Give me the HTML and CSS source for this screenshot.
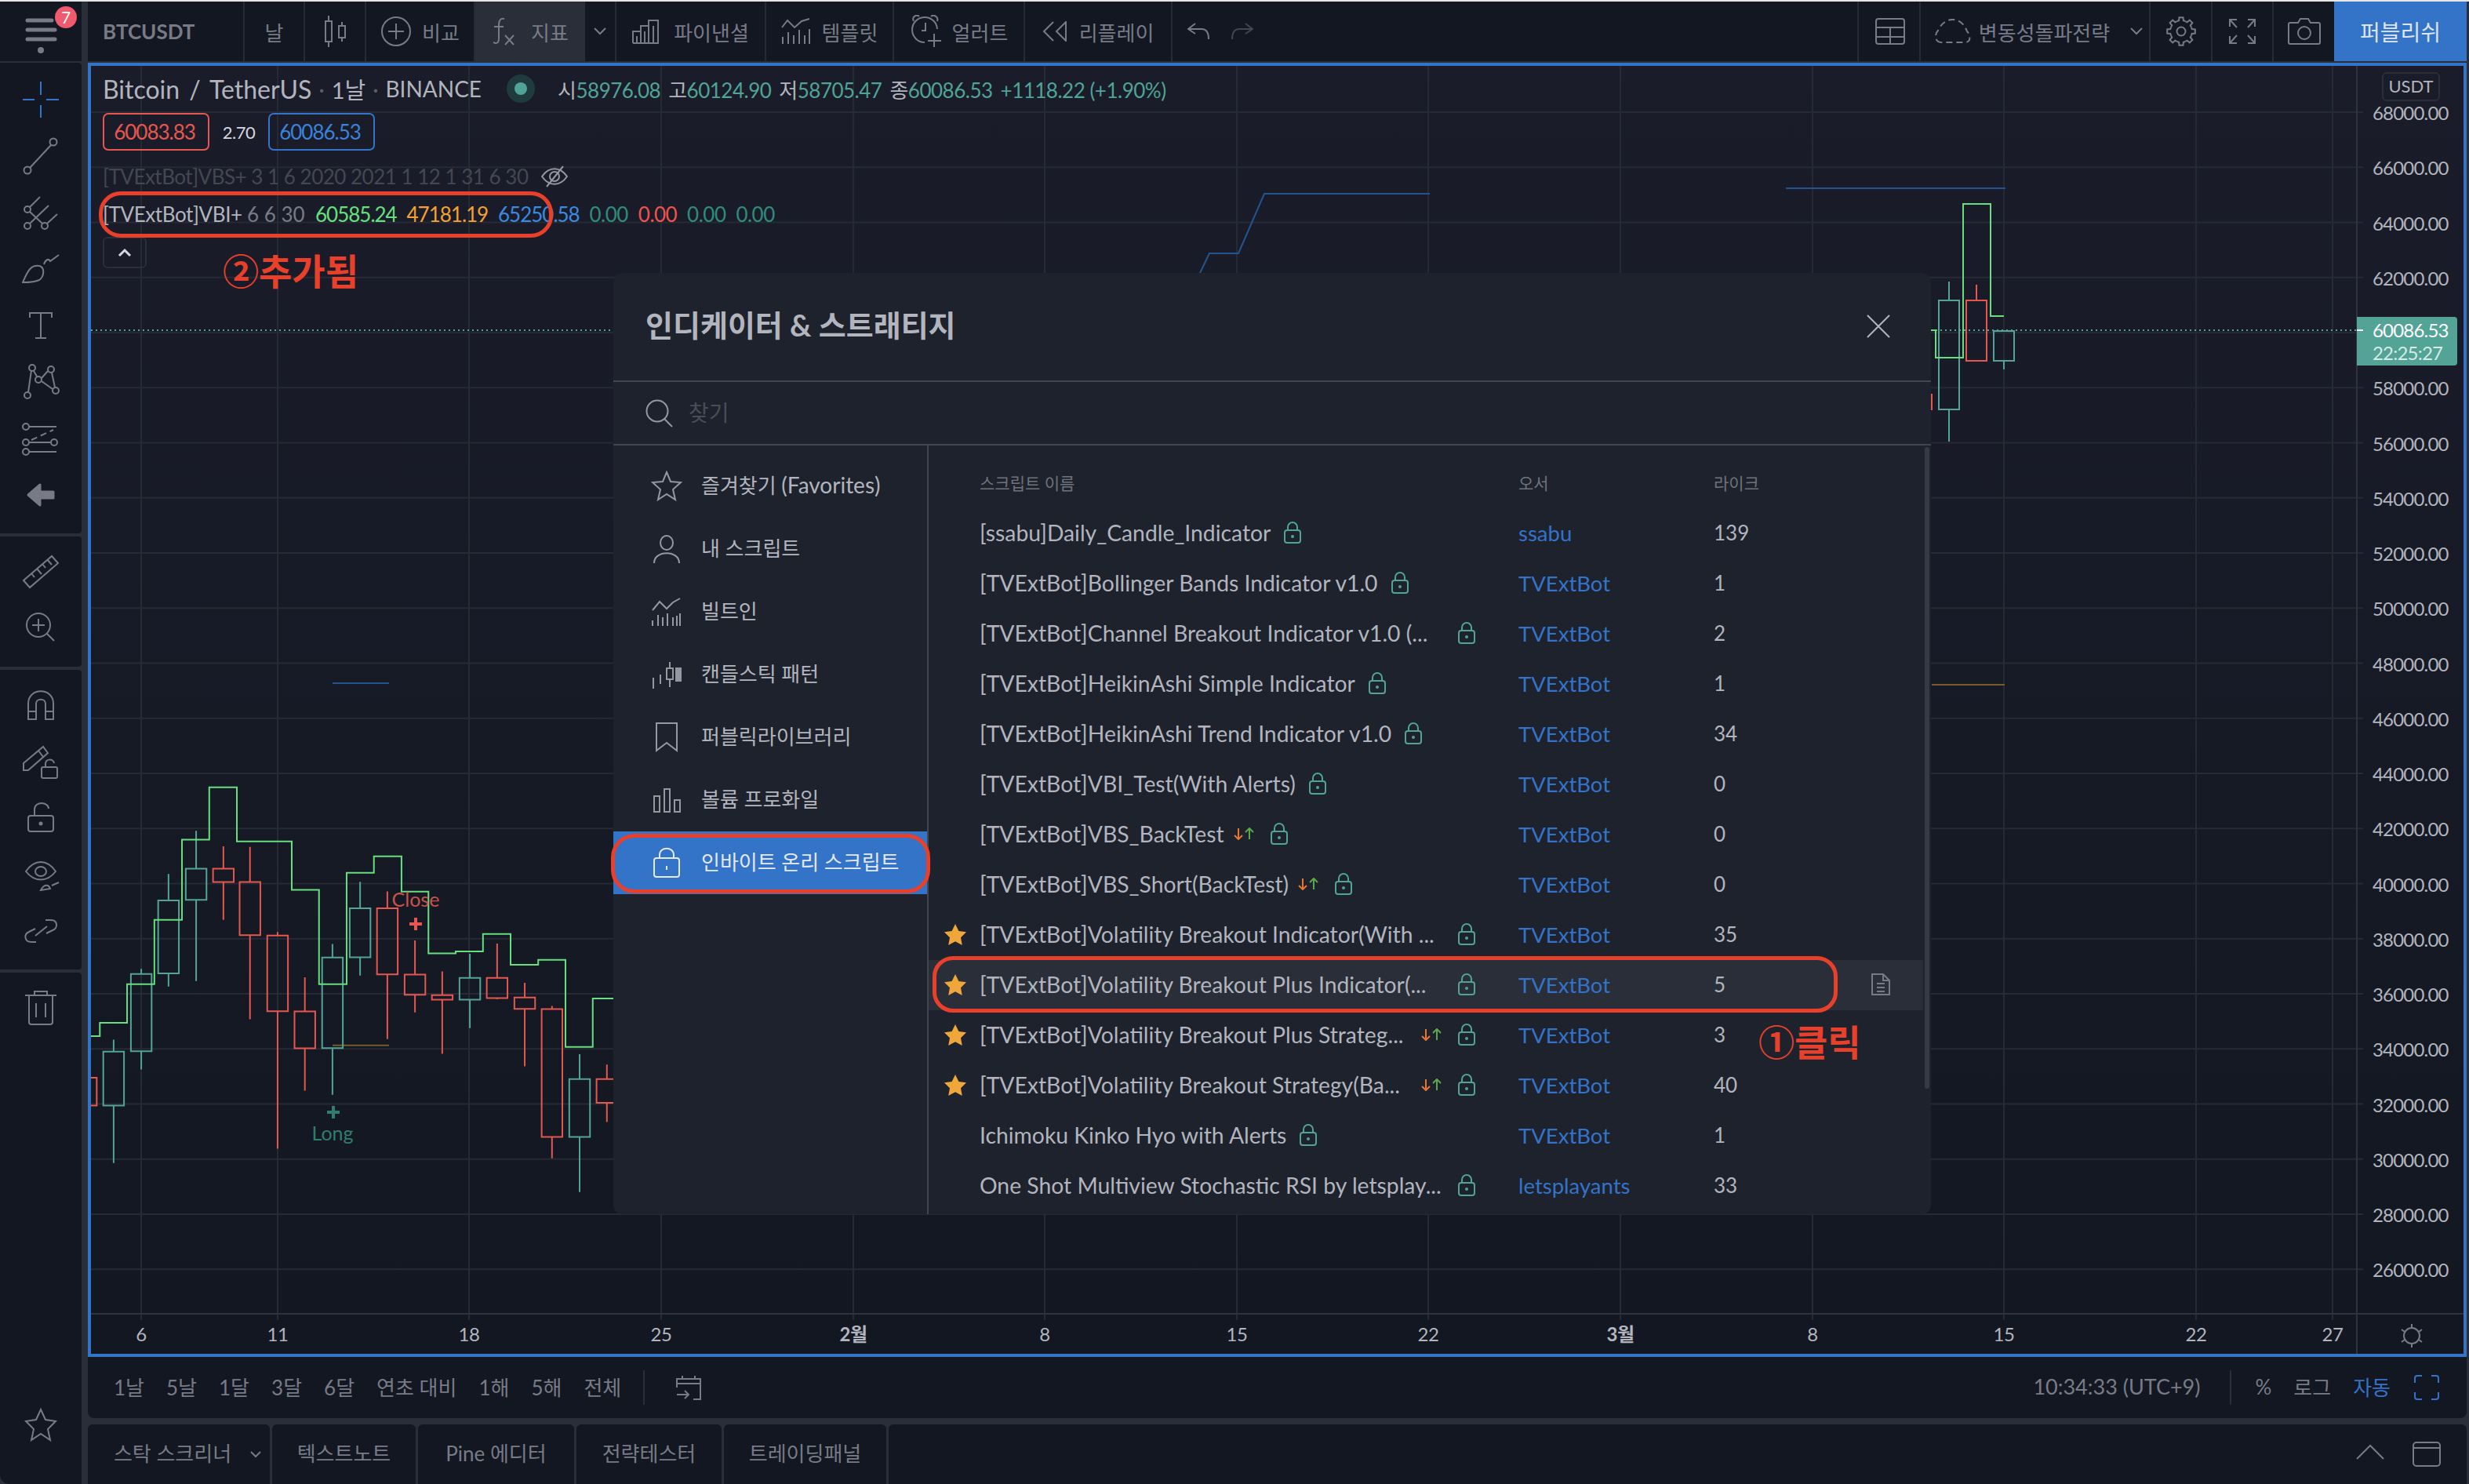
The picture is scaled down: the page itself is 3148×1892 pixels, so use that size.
FILE: index.html
```html
<!DOCTYPE html>
<html lang="ko">
<head>
<meta charset="utf-8">
<title>BTCUSDT</title>
<link rel="stylesheet" href="styles.css">
</head>
<body>
<div class="app">
  <svg class="defs" width="0" height="0" aria-hidden="true">
    <defs>
      <g id="lock"><rect x="1" y="11" width="20" height="16" rx="3"/><path d="M5 11V7a6 6 0 0 1 12 0v4"/><circle class="lock-dot" cx="11" cy="19" r="2"/></g>
      <g id="updown"><path class="dn-a" d="M6 1V15M1 10L6 15L11 10"/><path class="up-a" d="M20 15V1M15 6L20 1L25 6"/></g>
      <path id="gt" d="M-5.36-12.93L-2.91-13.69L-2.5-17.82L2.5-17.82L2.91-13.69L5.36-12.93"/>
      <polygon id="fstar" points="15,1 19.4,10 29,11.3 22,18.2 23.8,28 15,23.2 6.2,28 8,18.2 1,11.3 10.6,10"/>
    </defs>
  </svg>

  <header class="topbar">
    <div class="tb-menu">
      <svg class="ic ham" width="44" height="50" viewBox="0 0 44 50"><path class="thick" d="M4 5H35M4 17H39M4 29H39"/><circle class="solid" cx="21" cy="43" r="4"/></svg>
      <span class="badge">7</span>
    </div>
    <div class="tb-main">
      <div class="cell c-symbol"><span class="symbol">BTCUSDT</span></div>
      <div class="cell c-int"><span>날</span></div>
      <div class="cell c-candle"><svg class="ic" width="34" height="40" viewBox="0 0 34 40"><path d="M8 0V7M8 33V40M25 8V13M25 28V33"/><rect x="4" y="7" width="8" height="26"/><rect x="21" y="13" width="8" height="15"/></svg></div>
      <div class="cell c-compare"><svg class="ic" width="40" height="40" viewBox="0 0 40 40"><circle cx="20" cy="20" r="18"/><path d="M20 10V30M10 20H30"/></svg><span>비교</span></div>
      <div class="cell c-ind active"><svg class="ic" width="30" height="36" viewBox="0 0 30 36"><path d="M16 2C11 1 9 4 9 10V27C9 33 6 34 2 32M3 12H15M17 23L28 35M28 23L17 35"/></svg><span>지표</span></div>
      <div class="cell c-more"><svg class="ic" width="16" height="10" viewBox="0 0 16 10"><path d="M1 1L8 8L15 1"/></svg></div>
      <div class="cell c-fin"><svg class="ic" width="36" height="32" viewBox="0 0 36 32"><path d="M1 31V16H11V31M11 31V9H21V31M21 31V2H33V31H1"/><path d="M6 22V31M16 16V31M27 9V31"/></svg><span>파이낸셜</span></div>
      <div class="cell c-tpl"><svg class="ic" width="38" height="34" viewBox="0 0 38 34"><path d="M1 12L8 3L17 12L26 4L36 1M2 33V24M9 33V18M16 33V22M23 33V15M30 33V22M36 33V14"/></svg><span>템플릿</span></div>
      <div class="cell c-alert"><svg class="ic" width="42" height="42" viewBox="0 0 42 42"><path d="M19 35A16 16 0 1 1 35 18M5 8C2 2 9-1 12 2M27 2C30-1 37 2 35 8M20 10V20H15M31 24V41M23 33H40"/></svg><span>얼러트</span></div>
      <div class="cell c-replay"><svg class="ic" width="32" height="26" viewBox="0 0 32 26"><path d="M14 1L2 13L14 25M30 1L18 13L30 25V1ZM14 1"/></svg><span>리플레이</span></div>
      <div class="cell c-undo">
        <svg class="ic" width="28" height="22" viewBox="0 0 28 22"><path d="M10 1L1 8L10 14M1 8H18C24 8 27 12 27 21"/></svg>
        <svg class="ic dimmed" width="28" height="22" viewBox="0 0 28 22"><path d="M18 1L27 8L18 14M27 8H10C4 8 1 12 1 21"/></svg>
      </div>
      <div class="tb-fill"></div>
      <div class="cell c-grid"><svg class="ic" width="38" height="34" viewBox="0 0 38 34"><rect x="1" y="1" width="36" height="32" rx="3"/><path d="M1 12H37M1 24H37M19 12V33"/></svg></div>
      <div class="cell c-layout"><svg class="ic" width="46" height="32" viewBox="0 0 46 32"><path class="dash" d="M8 30C0 30-1 20 4 15C6 9 14 0 24 1C34 2 39 10 41 16C45 20 47 30 38 30Z"/></svg><span>변동성돌파전략</span><svg class="ic chev" width="16" height="10" viewBox="0 0 16 10"><path d="M1 1L8 8L15 1"/></svg></div>
      <div class="cell c-gear"><svg class="ic" width="40" height="40" viewBox="-20 -20 40 40"><use href="#gt"/><use href="#gt" transform="rotate(45)"/><use href="#gt" transform="rotate(90)"/><use href="#gt" transform="rotate(135)"/><use href="#gt" transform="rotate(180)"/><use href="#gt" transform="rotate(225)"/><use href="#gt" transform="rotate(270)"/><use href="#gt" transform="rotate(315)"/><circle r="5.5"/></svg></div>
      <div class="cell c-full"><svg class="ic" width="34" height="32" viewBox="0 0 34 32"><path d="M1 10V1H10M1 1L10 11M24 1H33V10M33 1L24 11M1 22V31H10M1 31L10 21M24 31H33V22M33 31L24 21"/></svg></div>
      <div class="cell c-cam"><svg class="ic" width="42" height="34" viewBox="0 0 42 34"><path d="M3 6H13L16 1H26L29 6H39Q41 6 41 8V31Q41 33 39 33H3Q1 33 1 31V8Q1 6 3 6Z"/><ellipse cx="21" cy="19" rx="8" ry="8"/></svg></div>
      <div class="cell c-publish">퍼블리쉬</div>
    </div>
  </header>

  <div class="workspace">
    <nav class="tools">
      <div class="tgroup g1">
        <div class="tool"><svg class="ic blue" width="48" height="48" viewBox="0 0 48 48"><path d="M24 1V18M24 31V47M1 24H16M31 24H47"/></svg></div>
        <div class="tool"><svg class="ic" width="48" height="48" viewBox="0 0 48 48"><circle cx="40" cy="6" r="4.5"/><circle cx="7" cy="42" r="4.5"/><path d="M37 10L10 39"/></svg></div>
        <div class="tool"><svg class="ic" width="48" height="48" viewBox="0 0 48 48"><path d="M23 4L10 17M10 23L26 38M34 15L10 38M45 26L32 38"/><circle cx="7" cy="20" r="4"/><circle cx="7" cy="41" r="4"/><circle cx="29" cy="41" r="4"/></svg></div>
        <div class="tool"><svg class="ic" width="48" height="48" viewBox="0 0 48 48"><path d="M1 41C6 30 10 18 22 20C30 22 28 34 22 38C16 41 6 41 1 41ZM28 18C30 12 34 10 36 14L47 6"/></svg></div>
        <div class="tool"><svg class="ic" width="48" height="48" viewBox="0 0 48 48"><path d="M10 14V8H38V14M24 8V40M17 40H31"/></svg></div>
        <div class="tool"><svg class="ic" width="48" height="48" viewBox="0 0 48 48"><circle cx="13" cy="6" r="4"/><circle cx="37" cy="8" r="4"/><circle cx="21" cy="21" r="4"/><circle cx="7" cy="41" r="4"/><circle cx="43" cy="35" r="4"/><path d="M15 10L19 17M25 19L33 10M38 12L42 31M12 9L8 37M25 23L39 33"/></svg></div>
        <div class="tool"><svg class="ic" width="48" height="48" viewBox="0 0 48 48"><circle cx="5" cy="9" r="4"/><circle cx="5" cy="29" r="4"/><circle cx="5" cy="41" r="4"/><circle cx="41" cy="29" r="4"/><path d="M9 9H44M9 29H37M9 41H44"/><path class="dash" d="M12 26L40 13"/></svg></div>
        <div class="tool"><svg class="ic" width="48" height="48" viewBox="0 0 48 48"><path class="arrow" d="M8 24L23 11V20H40V28H23V37Z"/></svg></div>
      </div>
      <div class="tgroup g2">
        <div class="tool"><svg class="ic" width="48" height="48" viewBox="0 0 48 48"><path d="M2 37L38 6L46 15L10 46ZM12 28L16 33M19 22L25 29M26 16L30 21M32 10L38 17"/></svg></div>
        <div class="tool"><svg class="ic" width="48" height="48" viewBox="0 0 48 48"><circle cx="21" cy="22" r="15"/><path d="M13 22H29M21 14V30M32 33L41 42"/></svg></div>
      </div>
      <div class="tgroup g3">
        <div class="tool"><svg class="ic" width="48" height="48" viewBox="0 0 48 48"><path d="M8 44V24C8 3 40 3 40 24V44H30V24C30 17 18 17 18 24V44ZM8 34H18M30 34H40"/></svg></div>
        <div class="tool"><svg class="ic" width="48" height="48" viewBox="0 0 48 48"><path d="M2 27L27 6L33 14L8 36H2ZM21 11L27 19M2 36H8"/><rect x="25" y="32" width="20" height="14" rx="2"/><path d="M30 32V28C30 21 40 21 41 27"/></svg></div>
        <div class="tool"><svg class="ic" width="48" height="48" viewBox="0 0 48 48"><rect x="8" y="22" width="32" height="20" rx="3"/><path d="M16 22V14C16 3 34 4 34 13"/><circle class="solid" cx="24" cy="32" r="2.5"/></svg></div>
        <div class="tool"><svg class="ic" width="48" height="48" viewBox="0 0 48 48"><path d="M5 20C16 4 32 4 43 20C32 34 16 34 5 20Z"/><ellipse cx="24" cy="20" rx="7" ry="6"/><path d="M24 44C28 36 34 36 36 42ZM38 38L47 34"/></svg></div>
        <div class="tool"><svg class="ic" width="48" height="48" viewBox="0 0 48 48"><path d="M18 38H12C3 38 2 28 9 25L17 21M30 10H37C46 10 46 21 39 23L31 27M17 30L32 18"/></svg></div>
      </div>
      <div class="tgroup g4">
        <div class="tool"><svg class="ic" width="48" height="48" viewBox="0 0 48 48"><path d="M4 8H44M9 8V42Q9 45 12 45H36Q39 45 39 42V8M16 8V3H32V8M18 18V36M30 18V36"/></svg></div>
        <div class="tool t-star"><svg class="ic" width="48" height="48" viewBox="0 0 48 48"><polygon points="24,5 30,18 43,20 33,30 36,44 24,36 12,44 15,30 5,20 18,18"/></svg></div>
      </div>
    </nav>

    <main class="center">
      <section class="chart">
        <svg class="plot" width="3025" height="1642" viewBox="116 84 3025 1642">
          <path class="grid" d="M116 143H3013M116 213.25H3013M116 283.5H3013M116 353.75H3013M116 424H3013M116 494.25H3013M116 564.5H3013M116 634.75H3013M116 705H3013M116 775.25H3013M116 845.5H3013M116 915.75H3013M116 986H3013M116 1056.25H3013M116 1126.5H3013M116 1196.75H3013M116 1267H3013M116 1337.25H3013M116 1407.5H3013M116 1477.75H3013M116 1548H3013M116 1618.25H3013"/>
          <path class="grid" d="M180 84V1683M354 84V1683M598 84V1683M843 84V1683M1088 84V1683M1332 84V1683M1577 84V1683M1821 84V1683M2066 84V1683M2311 84V1683M2555 84V1683M2800 84V1683M2974 84V1683"/>
          <path class="axis" d="M116 1675H3141M3005 84V1726"/>
          <path class="vb" d="M424 871H496M1530 348L1542 323H1579L1612 247H1823M2277 240H2557"/>
          <path class="orange" d="M2463 873H2556"/>
          <path class="dots" d="M116 421H3005"/>
          <g transform="translate(100 960) scale(.4401 .3699)">
            <path class="orange nss" d="M736 1008H900"/>
            <path class="c-red nss" d="M6 1119H53V1215H6ZM420 322V399M420 445V575M390 399H450V445H390ZM497 324V445M497 628V918M467 445H527V628H467ZM577 617V629M577 890V1364M547 629H607V890H547ZM656 773V891M656 1018V1164M626 891H686V1018H626ZM895 477V535M895 763V986M865 535H925V763H865ZM975 646V764M975 833V894M945 764H1005V833H945ZM1054 753V835M1054 850V1037M1024 835H1084V850H1024ZM1213 657V775M1213 845V849M1183 775H1243V845H1183ZM1293 792V843M1293 882V1080M1263 843H1323V882H1263ZM1372 872V883M1372 1323V1397M1342 883H1402V1323H1342ZM1531 1074V1124M1531 1206V1272M1501 1124H1561V1206H1501Z"/>
            <path class="c-teal nss" d="M102 988V1029M102 1215V1413M72 1029H132V1215H72ZM182 744V762M182 1028V1091M152 762H212V1028H152ZM261 417V508M261 760V805M231 508H291V760H231ZM341 268V399M341 506V786M311 399H371V506H311ZM736 658V705M736 1017V1178M706 705H766V1017H706ZM816 444V535M816 704V767M786 535H846V704H786ZM1134 692V775M1134 850V948M1104 775H1164V850H1104ZM1452 1038V1124M1452 1323V1513M1422 1124H1482V1323H1422Z"/>
            <path class="c-green nss" d="M36 976H62V930H141V797H220V575H300V299H379V118H459V305H618V472H697V797H777V413H856V356H936V478H1014V691H1093V684H1172V624H1252V730H1332V713H1411V1013H1490V846H1550"/>
          </g>
          <path class="c-red" d="M2463 502V523M2520 363V383M2507 383H2533V460H2507Z"/>
          <path class="c-teal" d="M2485 359V383M2485 522V563M2472 383H2498V522H2472ZM2555 460V471M2542 422H2568V460H2542Z"/>
          <path class="c-green" d="M2462 421H2468V456H2503V260H2538V403H2555"/>
          <path class="mk-red" d="M530 1170V1186M522 1178H538"/>
          <path class="mk-teal" d="M425 1410V1426M417 1418H433"/>
          <text class="lbl-red" x="530" y="1156" text-anchor="middle">Close</text>
          <text class="lbl-teal" x="424" y="1454" text-anchor="middle">Long</text>
          <g class="tlabels" text-anchor="middle">
            <text x="180" y="1710">6</text><text x="354" y="1710">11</text><text x="598" y="1710">18</text><text x="843" y="1710">25</text>
            <text class="strong" x="1088" y="1710">2월</text><text x="1332" y="1710">8</text><text x="1577" y="1710">15</text><text x="1821" y="1710">22</text>
            <text class="strong" x="2066" y="1710">3월</text><text x="2311" y="1710">8</text><text x="2555" y="1710">15</text><text x="2800" y="1710">22</text><text x="2974" y="1710">27</text>
          </g>
          <g class="sun" transform="translate(3075 1703)"><circle r="10"/><path d="M0-15V-10M0 15V10M-13-8L-9-5M13-8L9-5M-13 8L-9 5M13 8L9 5"/></g>
        </svg>

        <div class="legend">
          <div class="lg-title">
            <span class="lg-name-main">Bitcoin / TetherUS</span><span class="lg-dot">·</span><span class="lg-int">1날</span><span class="lg-dot">·</span><span class="lg-exch">BINANCE</span>
            <span class="status"><i></i></span>
            <span class="ohlc"><b>시</b><em>58976.08</em><b>고</b><em>60124.90</em><b>저</b><em>58705.47</em><b>종</b><em>60086.53</em><em class="chg">+1118.22 (+1.90%)</em></span>
          </div>
          <div class="lg-quote"><span class="q q-bid">60083.83</span><span class="q-spread">2.70</span><span class="q q-ask">60086.53</span></div>
          <div class="lg-hidden"><span>[TVExtBot]VBS+ 3 1 6 2020 2021 1 12 1 31 6 30</span><svg class="ic" width="34" height="28" viewBox="0 0 34 28"><path d="M1 14C10 1 24 1 33 14C24 27 10 27 1 14ZM28 1L7 27"/><circle cx="17" cy="14" r="6"/></svg></div>
          <div class="lg-study"><span class="s-name">[TVExtBot]VBI+</span><span class="s-args">6 6 30</span><span class="s-val green">60585.24</span><span class="s-val orange-t">47181.19</span><span class="s-val blue-t">65250.58</span><span class="s-zero teal">0.00</span><span class="s-zero red">0.00</span><span class="s-zero teal">0.00</span><span class="s-zero teal">0.00</span></div>
          <div class="lg-toggle"><svg width="18" height="12" viewBox="0 0 18 12"><path d="M2 10L9 3L16 10"/></svg></div>
          <div class="note note-2">②추가됨</div>
        </div>

        <div class="price-axis">
          <span class="usdt">USDT</span>
          <div>68000.00</div><div>66000.00</div><div>64000.00</div><div>62000.00</div><div>60000.00</div><div>58000.00</div><div>56000.00</div><div>54000.00</div><div>52000.00</div><div>50000.00</div><div>48000.00</div><div>46000.00</div><div>44000.00</div><div>42000.00</div><div>40000.00</div><div>38000.00</div><div>36000.00</div><div>34000.00</div><div>32000.00</div><div>30000.00</div><div>28000.00</div><div>26000.00</div>
          <span class="price-tag"><i></i>60086.53<small>22:25:27</small></span>
        </div>
      </section>

      <div class="range-bar">
        <span>1날</span><span>5날</span><span>1달</span><span>3달</span><span>6달</span><span>연초 대비</span><span>1해</span><span>5해</span><span>전체</span>
        <i class="rb-sep"></i>
        <svg class="ic rb-cal" width="32" height="32" viewBox="0 0 32 32"><path d="M1 16V5H31V31H22M1 11H31M8 1V5M24 1V5M1 25H16M11 20L16 25L11 30" /></svg>
        <div class="rb-right">
          <span class="clock">10:34:33 (UTC+9)</span>
          <i class="rb-sep"></i>
          <span class="pct">%</span><span>로그</span><span class="auto">자동</span>
          <svg class="ic blue corners" width="32" height="32" viewBox="0 0 32 32"><path d="M10 1H4Q1 1 1 4V10M22 1H28Q31 1 31 4V10M10 31H4Q1 31 1 28V22M22 31H28Q31 31 31 28V22"/></svg>
        </div>
      </div>

      <div class="tabs">
        <div class="tab t1"><span>스탁 스크리너</span><svg class="ic" width="14" height="9" viewBox="0 0 14 9"><path d="M1 1L7 7L13 1"/></svg></div>
        <div class="tab t2"><span>텍스트노트</span></div>
        <div class="tab t3"><span>Pine 에디터</span></div>
        <div class="tab t4"><span>전략테스터</span></div>
        <div class="tab t5"><span>트레이딩패널</span></div>
        <div class="tab tab-fill">
          <svg class="ic tab-up" width="36" height="20" viewBox="0 0 36 20"><path d="M1 19L18 2L35 19"/></svg>
          <svg class="ic" width="36" height="32" viewBox="0 0 36 32"><rect x="1" y="1" width="34" height="30" rx="4"/><path d="M1 8H35"/></svg>
        </div>
      </div>
    </main>
  </div>

  <section class="modal">
    <div class="m-head"><h2>인디케이터 &amp; 스트래티지</h2><svg class="ic m-close" width="30" height="30" viewBox="0 0 30 30"><path d="M1 1L29 29M29 1L1 29"/></svg></div>
    <div class="m-search"><svg class="ic" width="36" height="36" viewBox="0 0 36 36"><circle cx="15" cy="15" r="13.5"/><path d="M24 25L34 35"/></svg><span>찾기</span></div>
    <div class="m-body">
      <ul class="m-nav">
        <li><svg class="ic" width="40" height="40" viewBox="0 0 40 40"><polygon points="20,2 25,14 38,15 28,24 31,37 20,30 9,37 12,24 2,15 15,14"/></svg><span>즐겨찾기 <small>(Favorites)</small></span></li>
        <li><svg class="ic" width="40" height="40" viewBox="0 0 40 40"><ellipse cx="20" cy="12" rx="8" ry="9"/><path d="M4 38C4 21 36 21 36 38"/></svg><span>내 스크립트</span></li>
        <li><svg class="ic" width="40" height="40" viewBox="0 0 40 40"><path d="M2 18L11 7L20 16L28 8L37 3M2 38V31M9 38V24M15 38V27M21 38V22M28 38V27M33 38V25M37 38V22"/></svg><span>빌트인</span></li>
        <li><svg class="ic" width="40" height="40" viewBox="0 0 40 40"><path d="M3 38V24M12 32V20M24 4V36"/><rect class="fillbg" x="20" y="12" width="8" height="14"/><rect class="solid" x="31" y="11" width="8" height="18"/></svg><span>캔들스틱 패턴</span></li>
        <li><svg class="ic" width="40" height="40" viewBox="0 0 40 40"><path d="M7 2H33V37L20 27L7 37Z"/></svg><span>퍼블릭라이브러리</span></li>
        <li><svg class="ic" width="40" height="40" viewBox="0 0 40 40"><rect x="4" y="15" width="7" height="20"/><rect x="17" y="6" width="7" height="29"/><rect x="30" y="20" width="7" height="15"/></svg><span>볼륨 프로화일</span></li>
        <li class="on"><svg class="ic white" width="40" height="40" viewBox="0 0 40 40"><rect x="4" y="14" width="32" height="24" rx="3"/><path d="M11 14V10C11-1 29-1 29 10V14M20 24V29"/></svg><span>인바이트 온리 스크립트</span></li>
      </ul>
      <div class="m-list">
        <div class="m-row m-header"><i></i><span>스크립트 이름</span><span>오서</span><span>라이크</span></div>
        <div class="m-row"><i></i><div class="name"><span>[ssabu]Daily_Candle_Indicator</span><svg class="lock" width="22" height="28" viewBox="0 0 22 28"><use href="#lock"/></svg></div><a>ssabu</a><b>139</b></div>
        <div class="m-row"><i></i><div class="name"><span>[TVExtBot]Bollinger Bands Indicator v1.0</span><svg class="lock" width="22" height="28" viewBox="0 0 22 28"><use href="#lock"/></svg></div><a>TVExtBot</a><b>1</b></div>
        <div class="m-row"><i></i><div class="name fixed"><span>[TVExtBot]Channel Breakout Indicator v1.0 (...</span><svg class="lock" width="22" height="28" viewBox="0 0 22 28"><use href="#lock"/></svg></div><a>TVExtBot</a><b>2</b></div>
        <div class="m-row"><i></i><div class="name"><span>[TVExtBot]HeikinAshi Simple Indicator</span><svg class="lock" width="22" height="28" viewBox="0 0 22 28"><use href="#lock"/></svg></div><a>TVExtBot</a><b>1</b></div>
        <div class="m-row"><i></i><div class="name"><span>[TVExtBot]HeikinAshi Trend Indicator v1.0</span><svg class="lock" width="22" height="28" viewBox="0 0 22 28"><use href="#lock"/></svg></div><a>TVExtBot</a><b>34</b></div>
        <div class="m-row"><i></i><div class="name"><span>[TVExtBot]VBI_Test(With Alerts)</span><svg class="lock" width="22" height="28" viewBox="0 0 22 28"><use href="#lock"/></svg></div><a>TVExtBot</a><b>0</b></div>
        <div class="m-row"><i></i><div class="name"><span>[TVExtBot]VBS_BackTest</span><svg class="arr" width="26" height="16" viewBox="0 0 26 16"><use href="#updown"/></svg><svg class="lock" width="22" height="28" viewBox="0 0 22 28"><use href="#lock"/></svg></div><a>TVExtBot</a><b>0</b></div>
        <div class="m-row"><i></i><div class="name"><span>[TVExtBot]VBS_Short(BackTest)</span><svg class="arr" width="26" height="16" viewBox="0 0 26 16"><use href="#updown"/></svg><svg class="lock" width="22" height="28" viewBox="0 0 22 28"><use href="#lock"/></svg></div><a>TVExtBot</a><b>0</b></div>
        <div class="m-row"><i><svg class="star" width="30" height="29" viewBox="0 0 30 29"><use href="#fstar"/></svg></i><div class="name fixed"><span>[TVExtBot]Volatility Breakout Indicator(With ...</span><svg class="lock" width="22" height="28" viewBox="0 0 22 28"><use href="#lock"/></svg></div><a>TVExtBot</a><b>35</b></div>
        <div class="m-row hover"><i><svg class="star" width="30" height="29" viewBox="0 0 30 29"><use href="#fstar"/></svg></i><div class="name fixed"><span>[TVExtBot]Volatility Breakout Plus Indicator(...</span><svg class="lock" width="22" height="28" viewBox="0 0 22 28"><use href="#lock"/></svg></div><a>TVExtBot</a><b>5</b><svg class="ic doc" width="24" height="28" viewBox="0 0 24 28"><path d="M1 1H15L23 9V27H1ZM15 1V9H23M7 13H17M7 18H17M7 23H17"/></svg></div>
        <div class="m-row"><i><svg class="star" width="30" height="29" viewBox="0 0 30 29"><use href="#fstar"/></svg></i><div class="name fixed"><span>[TVExtBot]Volatility Breakout Plus Strateg...</span><svg class="arr" width="26" height="16" viewBox="0 0 26 16"><use href="#updown"/></svg><svg class="lock" width="22" height="28" viewBox="0 0 22 28"><use href="#lock"/></svg></div><a>TVExtBot</a><b>3</b></div>
        <div class="m-row"><i><svg class="star" width="30" height="29" viewBox="0 0 30 29"><use href="#fstar"/></svg></i><div class="name fixed"><span>[TVExtBot]Volatility Breakout Strategy(Ba...</span><svg class="arr" width="26" height="16" viewBox="0 0 26 16"><use href="#updown"/></svg><svg class="lock" width="22" height="28" viewBox="0 0 22 28"><use href="#lock"/></svg></div><a>TVExtBot</a><b>40</b></div>
        <div class="m-row"><i></i><div class="name"><span>Ichimoku Kinko Hyo with Alerts</span><svg class="lock" width="22" height="28" viewBox="0 0 22 28"><use href="#lock"/></svg></div><a>TVExtBot</a><b>1</b></div>
        <div class="m-row"><i></i><div class="name fixed"><span>One Shot Multiview Stochastic RSI by letsplay...</span><svg class="lock" width="22" height="28" viewBox="0 0 22 28"><use href="#lock"/></svg></div><a>letsplayants</a><b>33</b></div>
        <span class="thumb"></span>
      </div>
    </div>
  </section>

  <div class="mark mark-legend"></div>
  <div class="mark mark-nav"></div>
  <div class="mark mark-row"></div>
  <div class="note note-1">①클릭</div>
</div>
</body>
</html>
```

FILE: styles.css
```css
* { box-sizing: border-box; }
html, body { margin: 0; padding: 0; }
body {
  width: 3148px; height: 1892px; overflow: hidden;
  background: #2a2e39;
  font-family: Lato, "Noto Sans CJK KR", sans-serif;
  font-size: 26px; color: #787b86;
}
.app { position: relative; width: 3148px; height: 1892px; border-top: 2px solid #e6e6e8; }
.defs { position: absolute; }
.ic { display: block; fill: none; stroke: #787b86; stroke-width: 2; flex: none; }
.ic .thick { stroke-width: 5; stroke-linecap: round; }
.ic .solid { fill: #787b86; stroke: none; }
.ic .fillbg { fill: #1e222d; }
.ic .dash { stroke-dasharray: 8 5; }
.ic .arrow { fill: #787b86; stroke-linejoin: round; stroke-width: 3; }
.ic.blue { stroke: #3373c8; }
.ic.white { stroke: #d6dbe6; }
.ic.dimmed { stroke: #434651; }

/* top bar */
.topbar { display: flex; height: 76px; margin-bottom: 2px; }
.tb-menu { position: relative; width: 104px; background: #131722; margin-right: 8px; padding: 19px 0 0 31px; }
.badge { position: absolute; left: 70px; top: 6px; width: 28px; height: 28px; border-radius: 50%; background: #ef5a6f; color: #fff; font-size: 21px; line-height: 28px; text-align: center; }
.tb-main { display: flex; width: 3033px; background: #131722; }
.cell { display: flex; align-items: center; justify-content: center; gap: 14px; height: 76px; border-right: 2px solid #262a35; flex: none; }
.tb-fill { flex: 1; border-right: 2px solid #262a35; }
.c-symbol { width: 200px; justify-content: flex-start; padding-left: 19px; }
.symbol { font-weight: 700; font-size: 26px; }
.c-int { width: 77px; }
.c-candle { width: 78px; padding-left: 2px; }
.c-compare { width: 139px; gap: 13px; }
.c-ind { width: 140px; border-right: 0; gap: 20px; }
.c-ind.active { background: #2a2e39; }
.c-more { width: 40px; }
.c-fin { width: 191px; gap: 17px; }
.c-tpl { width: 163px; }
.c-alert { width: 167px; gap: 12px; }
.c-replay { width: 188px; gap: 15px; }
.c-undo { width: 115px; border-right: 0; gap: 28px; padding-left: 6px; }
.c-grid { width: 79px; padding-left: 2px; }
.c-layout { width: 293px; gap: 10px; padding-left: 10px; }
.c-layout .chev { margin-left: 16px; }
.c-gear { width: 79px; }
.c-full { width: 78px; }
.c-cam { width: 77px; border-right: 0; }
.c-publish { width: 169px; background: #3373c8; color: #dfe4ee; font-size: 28px; border-right: 0; }

/* layout */
.workspace { display: flex; gap: 8px; height: 1812px; }
.tools { width: 104px; display: flex; flex-direction: column; gap: 4px; }
.tgroup { background: #131722; border-radius: 0 4px 4px 0; }
.tool { height: 72px; display: flex; align-items: center; justify-content: center; }
.g1 { height: 600px; padding-top: 11px; }
.g2 { height: 166px; padding-top: 7px; }
.g3 { height: 382px; padding-top: 7px; }
.g3 .tool { height: 72.5px; }
.g4 { flex: 1; padding: 9px 0 40px; display: flex; flex-direction: column; justify-content: space-between; border-radius: 0 4px 0 12px; }
.center { width: 3033px; display: flex; flex-direction: column; }

/* chart */
.chart { position: relative; height: 1650px; border: 4px solid #3373c8; background: linear-gradient(#1a1d29, #131722); overflow: hidden; }
.plot { position: absolute; left: 0; top: 0; }
.grid { stroke: #262a35; stroke-width: 2; fill: none; }
.axis { stroke: #2f333e; stroke-width: 2; fill: none; }
.vb { stroke: #22558f; stroke-width: 2; fill: none; }
.orange { stroke: #7a5a26; stroke-width: 2; fill: none; }
.dots { stroke: #53a396; stroke-width: 2; stroke-dasharray: 2 4; fill: none; }
.c-red, .c-teal, .c-green { fill: none; stroke-width: 2; }
.c-red { stroke: #e5574f; }
.c-teal { stroke: #53a396; }
.c-green { stroke: #66e07e; }
.nss { vector-effect: non-scaling-stroke; }
.mk-red { stroke: #e5574f; stroke-width: 4; fill: none; }
.mk-teal { stroke: #2f7d6f; stroke-width: 4; fill: none; }
.lbl-red { fill: #c9524b; font-size: 25px; }
.lbl-teal { fill: #2f7d6f; font-size: 25px; }
.tlabels { fill: #b2b5be; font-size: 24px; letter-spacing: -0.5px; }
.tlabels .strong { font-weight: 700; }
.sun { fill: none; stroke: #787b86; stroke-width: 2; }

/* legend */
.legend { position: absolute; left: 15px; top: 7px; color: #b2b5be; }
.lg-title { display: flex; align-items: center; height: 44px; white-space: nowrap; margin-bottom: 9px; }
.lg-name-main { font-size: 32px; word-spacing: 4px; }
.lg-int { font-size: 29px; }
.lg-exch { font-size: 28px; }
.lg-dot { color: #5d606b; margin: 0 9px; font-size: 28px; }
.status { width: 36px; height: 36px; border-radius: 50%; background: #1f3b3d; margin: 0 29px 0 32px; display: flex; align-items: center; justify-content: center; }
.status i { width: 16px; height: 16px; border-radius: 50%; background: #4fa397; }
.ohlc { letter-spacing: -0.5px; }
.ohlc b { font-weight: 400; color: #b2b5be; }
.ohlc em { font-style: normal; color: #4fa397; margin-right: 10px; }
.lg-quote { display: flex; align-items: center; height: 48px; margin-bottom: 13px; letter-spacing: -1px; }
.q { display: block; height: 48px; width: 136px; line-height: 44px; padding-right: 4px; text-align: center; border: 2px solid; border-radius: 7px; }
.q-bid { color: #e5574f; border-color: #e5574f; }
.q-ask { color: #3b82d8; border-color: #3373c8; }
.q-spread { width: 75px; text-align: center; font-size: 22px; color: #d6d8de; letter-spacing: -0.5px; }
.lg-hidden { display: flex; align-items: center; gap: 16px; height: 40px; margin-bottom: 4px; color: #444752; white-space: nowrap; letter-spacing: -0.5px; }
.lg-hidden .ic { stroke: #9598a1; }
.lg-study { display: flex; align-items: center; height: 48px; margin-bottom: 5px; white-space: nowrap; }
.s-name { width: 184px; letter-spacing: -0.4px; }
.s-args { width: 87px; color: #787b86; }
.s-val { width: 116.5px; letter-spacing: -1px; }
.s-zero { width: 62.3px; letter-spacing: -0.5px; }
.green { color: #66e07e; }
.orange-t { color: #f5a030; }
.blue-t { color: #3b8ae0; }
.teal { color: #2f8c7c; }
.red { color: #ef5350; }
.lg-toggle { width: 56px; height: 40px; border: 2px solid #2a2e39; border-radius: 6px; display: flex; align-items: center; justify-content: center; }
.lg-toggle svg { fill: none; stroke: #d6d8de; stroke-width: 3; }
.note { color: #e8402a; font-size: 46px; font-weight: 700; line-height: 48px; white-space: nowrap; font-family: "Noto Sans CJK KR", sans-serif; }
.note-2 { position: absolute; left: 153px; top: 228px; }
.note-1 { position: absolute; left: 2242px; top: 1300px; }

/* price axis */
.price-axis { position: absolute; left: 2889px; top: 0; width: 136px; height: 1591px; padding: 25px 0 0 20px; font-size: 24px; color: #b2b5be; letter-spacing: -0.8px; }
.price-axis > div { height: 70.25px; line-height: 70.25px; }
.usdt { position: absolute; left: 32px; top: 8px; width: 74px; height: 37px; line-height: 32px; text-align: center; border: 2px solid #2a2e39; border-radius: 6px; font-size: 22px; letter-spacing: 0; }
.price-tag { position: absolute; left: 0; top: 320px; width: 128px; height: 62px; padding: 2px 0 0 20px; background: #53a396; color: #fff; border-radius: 0 4px 4px 0; line-height: 29px; font-size: 24px; }
.price-tag i { position: absolute; left: 0; top: 16px; width: 8px; height: 2px; background: #fff; }
.price-tag small { display: block; font-size: 24px; color: #d5ebe7; }

/* range bar */
.range-bar { display: flex; align-items: center; gap: 28px; height: 78px; padding: 0 35px 0 33px; background: #131722; border-radius: 0 0 8px 8px; margin-bottom: 8px; white-space: nowrap; }
.range-bar span { padding-bottom: 3px; }
.rb-sep { display: block; width: 2px; height: 44px; background: #2a2e39; }
.rb-cal { margin-left: 12px; }
.rb-right { margin-left: auto; display: flex; align-items: center; gap: 28px; }
.range-bar .clock { margin-right: 10px; font-size: 27px; }
.pct { margin-left: 2px; }
.auto { color: #3373c8; }
.corners { margin-left: 2px; }

/* tabs */
.tabs { display: flex; gap: 3px; height: 76px; }
.tab { background: #131722; border-radius: 6px 6px 0 0; display: flex; align-items: center; justify-content: center; white-space: nowrap; }
.tab span { padding-bottom: 5px; }
.t1 { width: 232px; gap: 24px; padding-left: 22px; }
.t2 { width: 183px; }
.t3 { width: 199px; }
.t4 { width: 185px; }
.t5 { width: 207px; }
.tab-fill { flex: 1; justify-content: flex-end; gap: 36px; padding-right: 33px; }
.tab-up { margin-bottom: 6px; }

/* modal */
.modal { position: absolute; left: 782px; top: 346px; width: 1680px; height: 1200px; background: #1e222d; border-radius: 12px; display: flex; flex-direction: column; color: #b2b5be; overflow: hidden; }
.m-head { height: 139px; flex: none; border-bottom: 2px solid #434651; display: flex; align-items: center; justify-content: space-between; padding: 0 52px 2px 41px; }
.m-head h2 { margin: 0 0 6px; font-size: 38px; font-weight: 700; color: #b2b5be; }
.m-close { stroke: #b2b5be; }
.m-search { height: 81px; flex: none; border-bottom: 2px solid #434651; display: flex; align-items: center; gap: 19px; padding-left: 41px; }
.m-search .ic { stroke: #9598a1; }
.m-search span { color: #4a4d58; font-size: 28px; padding-bottom: 3px; }
.m-body { flex: 1; display: flex; min-height: 0; }
.m-nav { list-style: none; margin: 0; padding: 12px 0 0; width: 402px; flex: none; border-right: 2px solid #434651; }
.m-nav li { height: 80px; display: flex; align-items: center; gap: 24px; padding-left: 48px; white-space: nowrap; }
.m-nav li span { padding-bottom: 5px; }
.m-nav small { font-size: 28px; }
.m-nav .ic { stroke: #9598a1; }
.m-nav .ic .solid { fill: #9598a1; }
.m-nav li.on { background: #3373c8; color: #e6e9f0; }
.m-nav li.on .ic { stroke: #e6e9f0; }
.m-list { position: relative; flex: 1; min-width: 0; overflow: hidden; }
.m-row { display: grid; grid-template-columns: 65px 687px 249px 1fr 108px; align-items: center; height: 64px; padding-bottom: 2px; white-space: nowrap; }
.m-row > i { display: flex; justify-content: flex-end; padding-right: 16px; }
.m-header { height: 80px; padding: 14px 0 0; font-size: 21px; color: #6f727d; }
.m-row a { color: #3373c8; font-size: 27.5px; }
.m-row b { font-weight: 400; }
.m-row.hover { background: #2a2e39; margin-right: 10px; }
.name { display: flex; align-items: center; font-size: 28.3px; }
.name .lock { margin-left: 17px; }
.name.fixed { width: 632px; }
.name.fixed span { margin-right: auto; }
.name.fixed .lock { margin-left: 0; }
.arr { flex: none; margin-left: 12px; fill: none; stroke-width: 2; }
.name .arr + .lock { margin-left: 21px; }
.dn-a { stroke: #e8772e; }
.up-a { stroke: #5aa848; }
.lock { fill: none; stroke: #4fa397; stroke-width: 2; flex: none; }
.lock-dot { fill: #4fa397; stroke: none; }
.star { display: block; fill: #f0a73a; }
.doc { justify-self: center; }
.thumb { position: absolute; right: 2px; top: 2px; width: 6px; height: 818px; border-radius: 3px; background: #363a45; }

/* annotations */
.mark { position: absolute; border: 5px solid #e8402a; pointer-events: none; }
.mark-legend { left: 126px; top: 242px; width: 579px; height: 59px; border-radius: 28px; }
.mark-nav { left: 779px; top: 1061px; width: 407px; height: 76px; border-radius: 30px; }
.mark-row { left: 1189px; top: 1217px; width: 1154px; height: 72px; border-radius: 26px; }
```
